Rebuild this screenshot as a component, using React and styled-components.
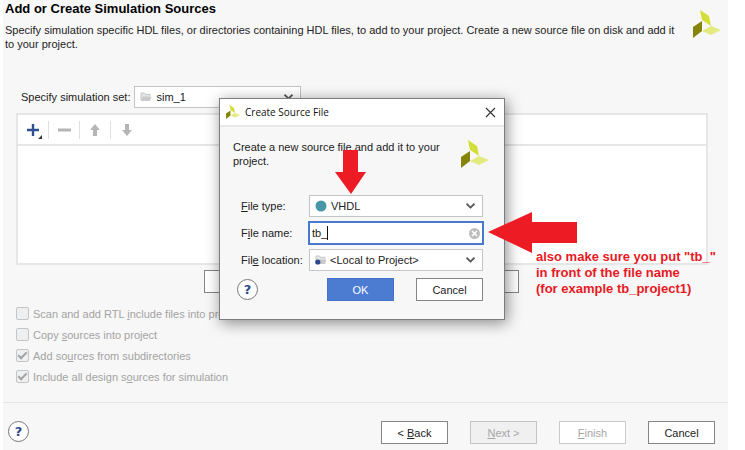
import React from "react";
import styled, { createGlobalStyle, css } from "styled-components";

const Global = createGlobalStyle`
  *, *::before, *::after { box-sizing: border-box; }
  body { margin: 0; background: #fff; color: #222; font: 11px/14px "Liberation Sans", Arial, sans-serif; }
  button, input, select { font: inherit; color: inherit; }
  h1, h2, p { margin: 0; }
`;

const Page = styled.div`
  position: relative;
  min-height: 100vh;
  padding: 0 17px 0 3px;
  display: flex;
  overflow: hidden;
`;

const Wizard = styled.main`
  flex: 1;
  min-width: 0;
  display: flex;
  flex-direction: column;
  background: #f7f7f7;
`;

const Header = styled.header`
  display: flex;
  justify-content: space-between;
  align-items: flex-start;
  padding: 1px 7px 0 2px;
  height: 86px;
`;

const Title = styled.h1`
  font-size: 13px;
  line-height: 16px;
  font-weight: 700;
  color: #000;
  margin-bottom: 6px;
`;

const Intro = styled.p`
  max-width: 676px;
`;

const HeaderLogo = styled.div`
  flex: none;
  margin-top: 9px;
  height: 28px;
`;

const Content = styled.section`
  flex: 1;
  display: flex;
  flex-direction: column;
  padding: 0 20px 0 13px;
`;

const SetRow = styled.div`
  display: flex;
  align-items: center;
  gap: 4px;
  padding-left: 5px;
  margin-bottom: 5px;
`;

const Combo = styled.div`
  display: flex;
  align-items: center;
  gap: ${(p) => p.$gap || 4}px;
  height: 22px;
  padding: 0 7px 0 5px;
  width: ${(p) => p.$width || "auto"};
  background: #fff;
  border: 1px solid #c4c4c4;
  svg { flex: none; }
`;

const Select = styled.select`
  appearance: none;
  flex: 1;
  min-width: 0;
  padding: 0;
  border: 0;
  outline: 0;
  background: transparent;
`;

const SourcePanel = styled.div`
  height: 152px;
  margin-bottom: 5px;
  background: #fff;
  border: 2px solid #e6e6e6;
`;

const Toolbar = styled.div`
  display: flex;
  align-items: center;
  height: 31px;
  border-bottom: 2px solid #e6e6e6;
`;

const ToolButton = styled.button`
  display: grid;
  place-items: center;
  width: 31px;
  height: 18px;
  padding: 0;
  border: 0;
  border-right: ${(p) => (p.$last ? "0" : "1px solid #e0e0e0")};
  background: transparent;
`;

const SourceActions = styled.div`
  display: flex;
  justify-content: center;
  gap: 6px;
  padding-right: 2px;
  margin-bottom: 10px;
`;

const buttonTones = {
  normal: css`background: #fff; border-color: #858585; color: #222;`,
  disabled: css`background: #fff; border-color: #cacaca; color: #a6a6a6;`,
  muted: css`background: #f0f0f0; border-color: #c4c4c4; color: #a6a6a6;`,
  primary: css`background: #4c7bd2; border-color: #4473cb; color: #fff;`,
};

const Button = styled.button`
  width: ${(p) => p.$width || 67}px;
  height: 23px;
  padding: 0;
  border: 1px solid;
  text-align: center;
  ${(p) => buttonTones[p.$tone || "normal"]}
`;

const Options = styled.div`
  display: flex;
  flex-direction: column;
`;

const Option = styled.label`
  display: flex;
  align-items: center;
  gap: 4px;
  height: 21px;
  color: #a3a3a3;
  white-space: pre;
`;

const Check = styled.input`
  appearance: none;
  display: grid;
  place-items: center;
  width: 13px;
  height: 13px;
  margin: 0;
  border: 1px solid #c5c5c5;
  border-radius: 2px;
  background: #eeeff0;
  &:checked::after {
    content: "";
    width: 9px;
    height: 5px;
    margin-bottom: 3px;
    border: solid #a2a2a2;
    border-width: 0 0 2px 2px;
    transform: rotate(-45deg);
  }
`;

const Footer = styled.footer`
  display: flex;
  align-items: center;
  gap: 22px;
  height: 48px;
  padding: 12px 13px 0 5px;
  border-top: 1px solid #e4e4e4;
`;

const HelpButton = styled.button`
  width: 21px;
  height: 21px;
  padding: 0;
  margin-right: auto;
  border: 1px solid #777;
  border-radius: 50%;
  background: #fff;
  color: #2b4a8b;
  font: 700 13px/18px "DejaVu Sans", sans-serif;
`;

const FooterHelp = styled(HelpButton)`
  margin-bottom: 2px;
`;

const Dialog = styled.section`
  position: absolute;
  left: 219px;
  top: 98px;
  width: 286px;
  background: #f7f7f7;
  border: 1px solid #7d7d7d;
  box-shadow: 2px 3px 14px rgba(0, 0, 0, 0.45);
`;

const DialogBar = styled.div`
  display: flex;
  align-items: center;
  gap: 5px;
  height: 28px;
  padding: 0 8px 0 6px;
  background: #fff;
  border-bottom: 2px solid #e9e9e9;
`;

const DialogTitle = styled.h2`
  flex: 1;
  font: 400 10px/16px "Open Sans", "Noto Sans", sans-serif;
  color: #111;
`;

const CloseButton = styled.button`
  display: grid;
  width: 11px;
  height: 11px;
  padding: 0;
  border: 0;
  background: transparent;
`;

const DialogIntro = styled.div`
  display: flex;
  justify-content: space-between;
  align-items: flex-start;
  padding: 13px 15px 0 13px;
  margin-bottom: 27px;
  svg { flex: none; }
`;

const DialogText = styled.p`
  max-width: 215px;
`;

const Form = styled.div`
  display: grid;
  grid-template-columns: 68px 1fr;
  align-items: center;
  row-gap: 5px;
  padding: 0 21px 0 21px;
`;

const NameField = styled.div`
  position: relative;
  display: flex;
  align-items: center;
  height: 24px;
  margin: -1px;
  padding: 0 2px;
  border: 2px solid #4a78ce;
  background: #fff;
`;

const NameInput = styled.input`
  flex: 1;
  min-width: 0;
  padding: 0;
  border: 0;
  outline: 0;
  background: transparent;
`;

const Caret = styled.i`
  position: absolute;
  left: 17px;
  top: 3px;
  width: 1px;
  height: 14px;
  background: #111;
`;

const ClearButton = styled.button`
  display: grid;
  padding: 0;
  border: 0;
  background: transparent;
`;

const DialogActions = styled.div`
  display: flex;
  align-items: center;
  gap: 22px;
  padding: 7px 21px 18px 17px;
`;

const Annotations = styled.svg`
  position: absolute;
  left: 335px;
  top: 150px;
  pointer-events: none;
`;

const Note = styled.p`
  position: absolute;
  left: 536px;
  top: 249px;
  color: #e8191f;
  font-size: 13px;
  line-height: 16px;
  font-weight: 700;
  white-space: nowrap;
`;

const Logo = ({ size }) => (
  <svg width={size} height={size} viewBox="0 0 28 28" aria-hidden="true">
    <path d="M7 0 16 6 18 16 9 10Z" fill="#d3df38" />
    <path d="M0 17 9 11V21L0 28Z" fill="#858409" />
    <path d="M9 21 18 16 28 20 18 25Z" fill="#e4eb7e" />
  </svg>
);

const Chevron = () => (
  <svg width="9" height="6" viewBox="0 0 9 6" aria-hidden="true">
    <path d="M.5.7 4.5 4.6 8.5.7" fill="none" stroke="#555" strokeWidth="1.8" />
  </svg>
);

const Folder = ({ dot }) => (
  <svg width="12" height="10" viewBox="0 0 12 10" aria-hidden="true">
    <path d="M1 8V1H4.5L5.5 2.3H10V4" fill="#e4e4e4" stroke="#c5c5c5" />
    <path d="M.8 9 3 4.5H11.5L10 9Z" fill="#c9c9c9" />
    {dot && <circle cx="2.8" cy="7" r="2.6" fill="#2b4a8b" />}
  </svg>
);

const PlusIcon = () => (
  <svg width="18" height="18" viewBox="0 0 18 18" aria-hidden="true">
    <path d="M9 3V15M3 9H15" stroke="#2f4f91" strokeWidth="2.4" />
    <path d="M18 14V18H14Z" fill="#333" />
  </svg>
);

const MinusIcon = () => (
  <svg width="13" height="14" viewBox="0 0 13 14" aria-hidden="true">
    <path d="M0 7H13" stroke="#b5b5b5" strokeWidth="3" />
  </svg>
);

const ArrowIcon = ({ down }) => (
  <svg width="10" height="12" viewBox="0 0 10 12" aria-hidden="true">
    <path d={down ? "M3 0H7V6H10L5 12 0 6H3Z" : "M3 12H7V6H10L5 0 0 6H3Z"} fill="#b5b5b5" />
  </svg>
);

export default function App() {
  return (
    <>
      <Global />
      <Page>
        <Wizard>
          <Header>
            <div>
              <Title>Add or Create Simulation Sources</Title>
              <Intro>
                Specify simulation specific HDL files, or directories containing HDL files, to add to your
                project. Create a new source file on disk and add it to your project.
              </Intro>
            </div>
            <HeaderLogo><Logo size={28} /></HeaderLogo>
          </Header>
          <Content>
            <SetRow>
              <label htmlFor="sim-set">Specify simulation set:</label>
              <Combo $width="167px">
                <Folder />
                <Select id="sim-set"><option>sim_1</option></Select>
                <Chevron />
              </Combo>
            </SetRow>
            <SourcePanel>
              <Toolbar>
                <ToolButton aria-label="Add"><PlusIcon /></ToolButton>
                <ToolButton aria-label="Remove" disabled><MinusIcon /></ToolButton>
                <ToolButton aria-label="Move up" disabled><ArrowIcon /></ToolButton>
                <ToolButton aria-label="Move down" disabled $last><ArrowIcon down /></ToolButton>
              </Toolbar>
            </SourcePanel>
            <SourceActions>
              <Button $width={101} aria-label="Add Files" />
              <Button $width={101} aria-label="Add Directories" />
              <Button $width={101} aria-label="Create File" />
            </SourceActions>
            <Options>
              <Option><Check type="checkbox" disabled /><span>Scan and add RTL <u>i</u>nclude files into project</span></Option>
              <Option><Check type="checkbox" disabled /><span>Copy <u>s</u>ources into project</span></Option>
              <Option><Check type="checkbox" disabled defaultChecked /><span>Add so<u>u</u>rces from subdirectories</span></Option>
              <Option><Check type="checkbox" disabled defaultChecked /><span>Include all design s<u>o</u>urces for simulation</span></Option>
            </Options>
          </Content>
          <Footer>
            <FooterHelp aria-label="Help">?</FooterHelp>
            <Button>&lt; <u>B</u>ack</Button>
            <Button $tone="muted" disabled><u>N</u>ext &gt;</Button>
            <Button $tone="disabled" disabled><u>F</u>inish</Button>
            <Button>Cancel</Button>
          </Footer>
        </Wizard>

        <Dialog role="dialog" aria-labelledby="dialog-title">
          <DialogBar>
            <Logo size={14} />
            <DialogTitle id="dialog-title">Create Source File</DialogTitle>
            <CloseButton aria-label="Close">
              <svg width="11" height="11" viewBox="0 0 11 11" aria-hidden="true">
                <path d="M1 1 10 10M10 1 1 10" stroke="#333" strokeWidth="1.1" />
              </svg>
            </CloseButton>
          </DialogBar>
          <DialogIntro>
            <DialogText>Create a new source file and add it to your project.</DialogText>
            <Logo size={28} />
          </DialogIntro>
          <Form>
            <label htmlFor="file-type"><u>F</u>ile type:</label>
            <Combo>
              <svg width="12" height="12" viewBox="0 0 12 12" aria-hidden="true">
                <circle cx="6" cy="6" r="5.5" fill="#4797a9" />
              </svg>
              <Select id="file-type"><option>VHDL</option></Select>
              <Chevron />
            </Combo>
            <label htmlFor="file-name">F<u>i</u>le name:</label>
            <NameField>
              <NameInput id="file-name" type="text" defaultValue="tb_" />
              <Caret />
              <ClearButton aria-label="Clear">
                <svg width="11" height="11" viewBox="0 0 11 11" aria-hidden="true">
                  <circle cx="5.5" cy="5.5" r="5.5" fill="#bdbdbd" />
                  <path d="M3 3 8 8M8 3 3 8" stroke="#fff" strokeWidth="1.5" />
                </svg>
              </ClearButton>
            </NameField>
            <label htmlFor="file-location">Fil<u>e</u> location:</label>
            <Combo $gap={3}>
              <Folder dot />
              <Select id="file-location"><option>&lt;Local to Project&gt;</option></Select>
              <Chevron />
            </Combo>
          </Form>
          <DialogActions>
            <HelpButton aria-label="Help">?</HelpButton>
            <Button $tone="primary">OK</Button>
            <Button>Cancel</Button>
          </DialogActions>
        </Dialog>

        <Annotations width="243" height="104" viewBox="0 0 243 104" aria-hidden="true">
          <path d="M8 0H23V22H31L16 44 0 22H8Z" fill="#ed1c24" />
          <path d="M153 82 197 62V72H242V93H197V103Z" fill="#ed1c24" />
        </Annotations>
        <Note>
          also make sure you put "tb_"<br />
          in front of the file name<br />
          (for example tb_project1)
        </Note>
      </Page>
    </>
  );
}
